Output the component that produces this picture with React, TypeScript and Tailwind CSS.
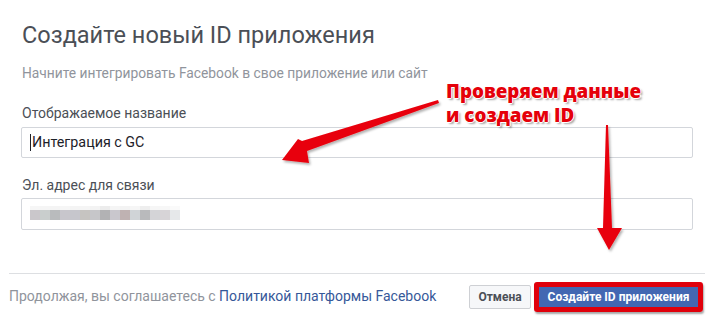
import React from "react";

const blocks = [
  "#cac7cb", "#c9cecd", "#b9bbbd", "#c8c6cc", "#c6c6cc", "#c6c4c1", "#c6c6c9",
  "#b2b2b4", "#c9c7cd", "#bfb2b2", "#d0d4d7", "#b9babc", "#d4d4d7", "#d7d4d7", "#e6e8ea",
];
const tops = [
  "#f6f6f6", "#f5f5f5", "#f4f4f4", "#f6f6f6", "#f4f4f4", "#f5f5f5", "#f3f3f3",
  "#ececec", "#f5f5f5", "#f3f3f3", "#f6f6f6", "#eeeeee", "#f6f6f6", "#f7f7f7", "#fafafa",
];

export default function App() {
  return (
    <div className="relative w-[713px] h-[321px] bg-white overflow-hidden font-['Roboto','Liberation_Sans',sans-serif]">
      <div className="pl-[21px] pr-[20px] pt-[21px]">
        <h1 className="text-[23.5px] leading-[28px] text-[#4b4f56] pl-[1px]">Создайте новый ID приложения</h1>
        <p className="mt-[15px] text-[13.8px] leading-[18px] text-[#90949c] pl-[1px]">
          Начните интегрировать Facebook в свое приложение или сайт
        </p>
        <div className="mt-[22px] text-[14px] leading-[18px] text-[#4b4f56] pl-[1px]">Отображаемое название</div>
        <div className="mt-[5px] h-[31px] border border-[#d3d6db] rounded-[2px] flex items-center pl-[8px]">
          <span className="w-[1px] h-[17px] bg-[#1d2129]" />
          <span className="text-[14.3px] text-[#1d2129] ml-[1px]">Интеграция с GC</span>
        </div>
        <div className="mt-[18px] text-[14px] leading-[18px] text-[#4b4f56] pl-[1px]">Эл. адрес для связи</div>
        <div className="mt-[4px] h-[32px] border border-[#d3d6db] rounded-[2px] flex items-center pl-[8px]">
          <div className="flex flex-col -mt-[2px]">
            <div className="flex">
              {tops.map((c, i) => (
                <div key={i} className="w-[10px] h-[4px]" style={{ backgroundColor: c }} />
              ))}
            </div>
            <div className="flex">
              {blocks.map((c, i) => (
                <div key={i} className="w-[10px] h-[10px]" style={{ backgroundColor: c }} />
              ))}
            </div>
          </div>
        </div>
      </div>
      <div className="mx-[9px] mr-[8px] mt-[43px] border-t border-[#dddfe2] flex items-center justify-between h-[46px]">
        <div className="text-[14px] text-[#90949c]">
          Продолжая, вы соглашаетесь с <span className="text-[#365899]">Политикой платформы Facebook</span>
        </div>
        <div className="flex items-center gap-[3px] pr-[2px]">
          <div className="h-[24px] w-[62px] border border-[#ced0d4] bg-[#f6f7f9] rounded-[2px] flex items-center justify-center text-[12px] font-bold text-[#4b4f56]">
            Отмена
          </div>
          <div className="h-[30px] w-[169px] border-[5px] border-[#e0000b] rounded-[3px] shadow-[1px_2px_2px_rgba(0,0,0,0.35)] flex">
            <div className="flex-1 bg-[#4267b2] flex items-center justify-center text-[12px] font-bold text-white">
              Создайте ID приложения
            </div>
          </div>
        </div>
      </div>

      <div className="absolute left-[446px] top-[79px] font-['Open_Sans',sans-serif] font-extrabold text-[18.8px] leading-[24px] text-[#e5000a] [text-shadow:1px_0_0_#fff,-1px_0_0_#fff,0_1px_0_#fff,0_-1px_0_#fff,2px_2px_2px_rgba(0,0,0,0.35)]">
        <div>Проверяем данные</div>
        <div>и создаем ID</div>
      </div>

      <svg className="absolute left-0 top-0" width="713" height="321" viewBox="0 0 713 321">
        <defs>
          <filter id="sh" x="-20%" y="-20%" width="140%" height="140%">
            <feDropShadow dx="1.5" dy="2" stdDeviation="1.2" floodColor="#000" floodOpacity="0.3" />
          </filter>
        </defs>
        <g filter="url(#sh)" fill="#e8000c">
          <polygon points="438,100 439,103 307,151 309,163 282,160 298,139 302,141" />
          <polygon points="606,125 608,125 612,228 622,228 609,250 597,228 603,228" />
        </g>
      </svg>
    </div>
  );
}
